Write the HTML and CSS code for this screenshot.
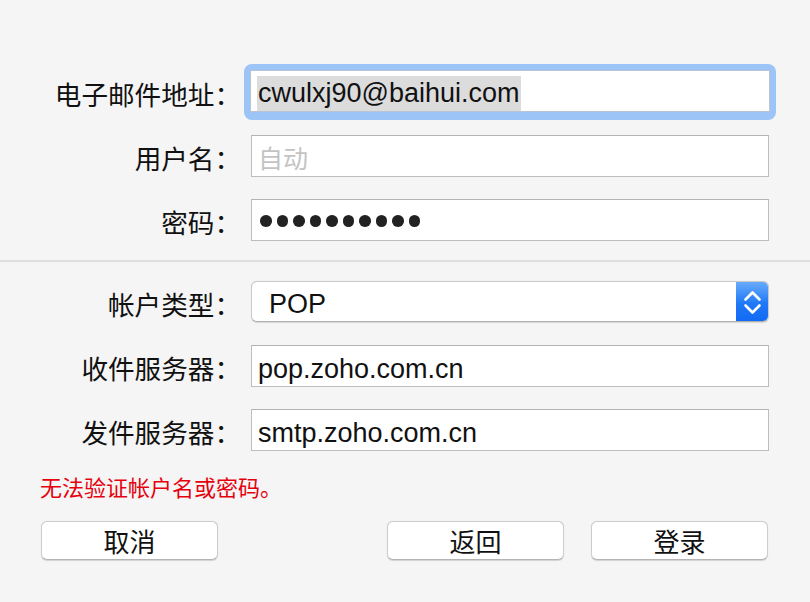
FILE: index.html
```html
<!DOCTYPE html>
<html lang="zh-CN">
<head>
<meta charset="utf-8">
<title>添加邮件帐户</title>
<link rel="stylesheet" href="styles.css">
</head>
<body>
<div class="sheet">
  <div class="grid">
    <div class="label">电子邮件地址：</div>
    <div class="focus-ring">
      <div class="field"><span class="selected">cwulxj90@baihui.com</span></div>
    </div>

    <div class="label">用户名：</div>
    <div class="field"><span class="placeholder">自动</span></div>

    <div class="label">密码：</div>
    <div class="field dots">
      <span class="dot"></span><span class="dot"></span><span class="dot"></span><span class="dot"></span><span class="dot"></span>
      <span class="dot"></span><span class="dot"></span><span class="dot"></span><span class="dot"></span><span class="dot"></span>
    </div>
  </div>

  <div class="separator"></div>

  <div class="grid">
    <div class="label">帐户类型：</div>
    <div class="popup">
      <span class="popup-text">POP</span>
      <span class="popup-arrows">
        <svg width="33" height="40" viewBox="0 0 33 40">
          <path d="M9.5 17.5 L16.5 10.5 L23.5 17.5" fill="none" stroke="#fff" stroke-width="2.6" stroke-linecap="round" stroke-linejoin="round"/>
          <path d="M9.5 23.5 L16.5 30.5 L23.5 23.5" fill="none" stroke="#fff" stroke-width="2.6" stroke-linecap="round" stroke-linejoin="round"/>
        </svg>
      </span>
    </div>

    <div class="label">收件服务器：</div>
    <div class="field">pop.zoho.com.cn</div>

    <div class="label">发件服务器：</div>
    <div class="field">smtp.zoho.com.cn</div>
  </div>

  <div class="error">无法验证帐户名或密码。</div>

  <div class="buttons">
    <button class="btn">取消</button>
    <button class="btn btn-back">返回</button>
    <button class="btn">登录</button>
  </div>
</div>
</body>
</html>
```

FILE: styles.css
```css
html, body {
  margin: 0;
  padding: 0;
  background: #f5f5f5;
}

body {
  font-family: "Liberation Sans", "Noto Sans CJK SC", sans-serif;
  color: #111;
}

.sheet {
  width: 810px;
  height: 602px;
  padding-top: 71px;
  box-sizing: border-box;
}

.grid {
  display: grid;
  grid-template-columns: 251px 518px;
  grid-auto-rows: 42px;
  row-gap: 22px;
}

.label {
  font-family: "Noto Sans CJK SC", sans-serif;
  font-size: 26.6px;
  line-height: 42px;
  text-align: right;
  padding-right: 10px;
  padding-top: 2px;
  color: #111;
  white-space: nowrap;
}

.field {
  box-sizing: border-box;
  height: 42px;
  background: #fff;
  border: 1px solid #bdbdbd;
  border-top-color: #b3b3b3;
  font-size: 27px;
  line-height: 40px;
  padding: 5px 6px 0 6px;
  color: #111;
  white-space: nowrap;
  display: flex;
  align-items: center;
}

.focus-ring {
  margin: -7px;
  padding: 6px;
  border-radius: 8px;
  background: #9dc4f6;
}

.focus-ring .field {
  border-color: #b8c4d2;
}

.selected {
  background: #dcdcdc;
  line-height: 35px;
  padding: 0 1px;
}

.placeholder {
  font-family: "Noto Sans CJK SC", sans-serif;
  font-size: 25px;
  color: #c3c3c3;
  margin-top: -3px;
}

.dots {
  gap: 5px;
  padding-left: 8px;
  padding-top: 2px;
}

.dot {
  width: 11.5px;
  height: 11.5px;
  border-radius: 50%;
  background: #222;
}

.separator {
  height: 2px;
  background: #dfdfdf;
  margin: 19px 0;
}

.popup {
  box-sizing: border-box;
  height: 41px;
  background: #fff;
  border: 1px solid #cacaca;
  border-bottom-color: #b0b0b0;
  border-radius: 6px;
  box-shadow: 0 0.5px 1px rgba(0, 0, 0, 0.12);
  display: flex;
  align-items: center;
  overflow: hidden;
}

.popup-text {
  flex: 1;
  font-size: 27px;
  padding-left: 17px;
  padding-top: 5px;
  color: #111;
}

.popup-arrows {
  width: 33px;
  height: 41px;
  margin: -1px -1px -1px 0;
  background: linear-gradient(#6badfb, #1f78f7 55%, #1169f3);
  display: flex;
  align-items: center;
  justify-content: center;
}

.popup-arrows svg {
  display: block;
}

.error {
  font-family: "Noto Sans CJK SC", sans-serif;
  font-size: 22px;
  line-height: 30px;
  color: #e6000e;
  margin-top: 20px;
  padding-left: 40px;
}

.buttons {
  display: flex;
  gap: 27px;
  margin-top: 20px;
  padding: 0 42px 0 41px;
}

.btn {
  width: 177px;
  height: 39px;
  box-sizing: border-box;
  background: #fff;
  border: 1px solid #cdcdcd;
  border-bottom-color: #b4b4b4;
  border-radius: 6px;
  box-shadow: 0 0.5px 1px rgba(0, 0, 0, 0.15);
  font-family: "Noto Sans CJK SC", sans-serif;
  font-size: 26px;
  line-height: 36px;
  padding: 0;
  color: #111;
}

.btn-back {
  margin-left: auto;
}
```
